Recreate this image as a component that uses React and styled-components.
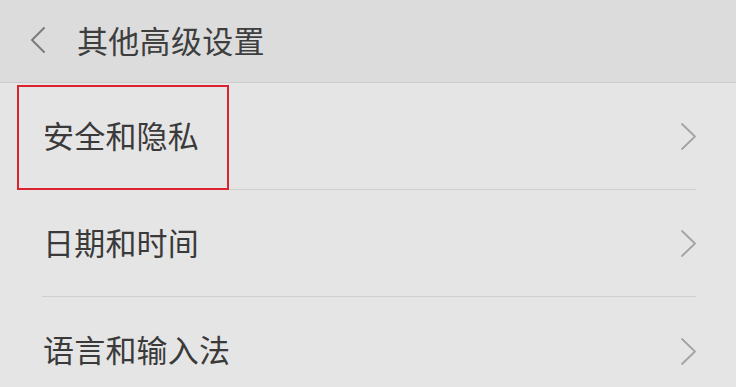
import React from 'react';
import styled, { createGlobalStyle } from 'styled-components';

const GlobalStyle = createGlobalStyle`
  html, body {
    margin: 0;
    padding: 0;
    background: #e5e5e5;
  }
  body {
    font-family: "Noto Sans CJK SC", "Noto Sans", sans-serif;
  }
`;

const items = ['安全和隐私', '日期和时间', '语言和输入法'];

const BackIcon = () => (
    <svg width="18" height="28" viewBox="0 0 18 28" fill="none">
        <path d="M15 2 L3 14 L15 26" stroke="#7c7c7c" strokeWidth="2" strokeLinecap="round" strokeLinejoin="round" />
    </svg>
);

const ChevronIcon = () => (
    <svg width="17" height="29" viewBox="0 0 17 29" fill="none">
        <path d="M2 2 L15 14.5 L2 27" stroke="#a3a3a3" strokeWidth="1.8" strokeLinecap="round" strokeLinejoin="round" />
    </svg>
);

const App = () => {
    return (
        <Page>
            <GlobalStyle />
            <Header>
                <BackButton><BackIcon /></BackButton>
                <Title>其他高级设置</Title>
            </Header>
            <List>
                {items.map((label, i) => (
                    <Row key={label} $last={i === items.length - 1}>
                        <Label>{label}</Label>
                        <ChevronIcon />
                    </Row>
                ))}
                <Highlight />
            </List>
        </Page>
    );
};

export default App;

const Page = styled.div`
  width: 736px;
  height: 387px;
  overflow: hidden;
  background: #e5e5e5;
`;

const Header = styled.div`
  height: 83px;
  display: flex;
  align-items: center;
  background: #dcdcdc;
  border-bottom: 1px solid #cdcdcd;
  box-sizing: border-box;
  padding-left: 29px;
`;

const BackButton = styled.div`
  display: flex;
  align-items: center;
  width: 48px;
  margin-top: -2px;
`;

const Title = styled.div`
  font-size: 31px;
  color: #3e3e3e;
  letter-spacing: 0.3px;
  margin-top: -3px;
`;

const List = styled.div`
  position: relative;
  margin: 0 40px 0 42px;
`;

const Row = styled.div`
  height: 107px;
  display: flex;
  align-items: center;
  justify-content: space-between;
  box-sizing: border-box;
  border-bottom: ${p => (p.$last ? 'none' : '1px solid #d0d0d0')};
  padding-left: 1px;

  svg {
    margin-right: -1px;
    margin-top: 1px;
  }
`;

const Label = styled.div`
  font-size: 31px;
  color: #3a3a3a;
  letter-spacing: 0.2px;
  margin-top: -4px;
`;

const Highlight = styled.div`
  position: absolute;
  left: -25px;
  top: 2px;
  width: 212px;
  height: 105px;
  box-sizing: border-box;
  border: 2px solid #d9232e;
  pointer-events: none;
`;
